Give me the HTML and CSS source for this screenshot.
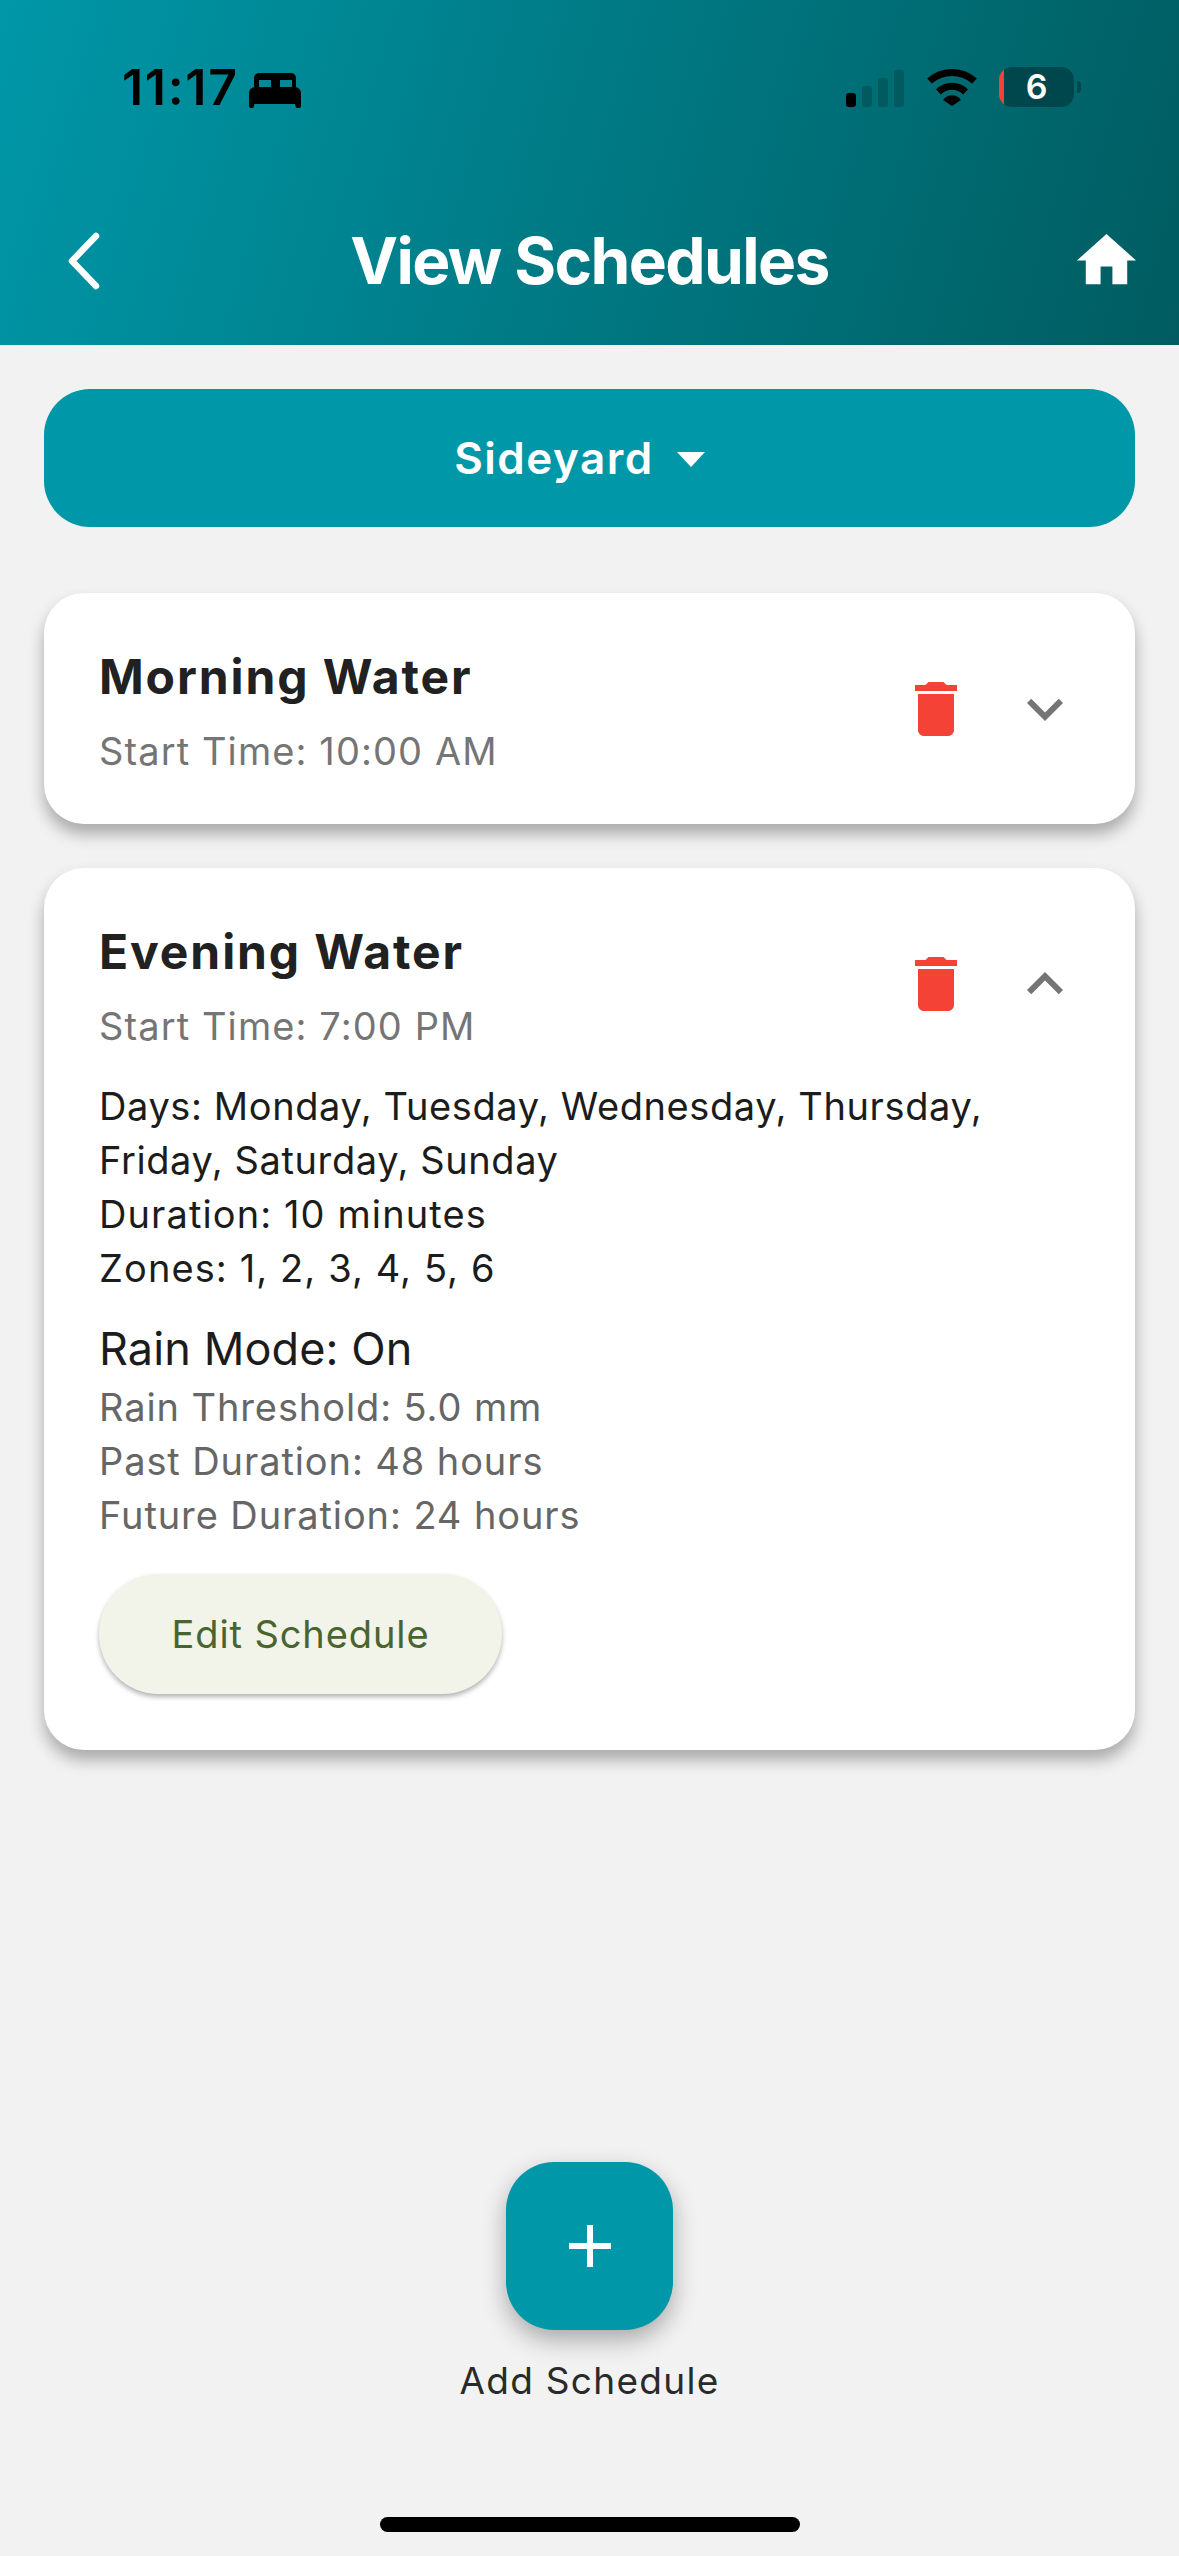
FILE: index.html
```html
<!DOCTYPE html>
<html lang="en">
<head>
<meta charset="utf-8">
<title>View Schedules</title>
<link rel="stylesheet" href="styles.css">
</head>
<body>
<div class="page">
  <header class="header">
    <div class="status">
      <div class="status-left">
        <span class="time">11:17</span>
        <svg class="bed" viewBox="0 0 52 36"><path fill-rule="evenodd" d="M10 1h32a5 5 0 0 1 5 5v9H5V6a5 5 0 0 1 5-5zM10 8v7h12V8zM31 8v7h12V8z"/><path d="M6 15h40a6 6 0 0 1 6 6v13a2 2 0 0 1-2 2h-1.500a2 2 0 0 1-2-2l-.500-2H5.500L5 34a2 2 0 0 1-2 2H2a2 2 0 0 1-2-2V21a6 6 0 0 1 6-6z"/></svg>
      </div>
      <div class="status-right">
        <div class="bars"><i class="bar bar-1"></i><i class="bar bar-2"></i><i class="bar bar-3"></i><i class="bar bar-4"></i></div>
        <svg class="wifi" viewBox="0 0 52 38"><path class="wifi-arc" d="M3.500 12A34 34 0 0 1 48.500 12"/><path class="wifi-arc" d="M12.500 23A19 19 0 0 1 39.500 23"/><path d="M17 31A11 11 0 0 1 35 31L26 37Z"/></svg>
        <div class="battery"><span>6</span></div>
        <i class="nub"></i>
      </div>
    </div>
    <div class="titlebar">
      <svg class="back" viewBox="0 0 40 60"><path d="M32 5L8 30L32 55"/></svg>
      <h1 class="title">View Schedules</h1>
      <svg class="home" viewBox="0 0 24 24"><path d="M10 20v-6h4v6h5v-8h3L12 3 2 12h3v8z"/></svg>
    </div>
  </header>

  <main class="main">
    <div class="dropdown"><span>Sideyard</span><i class="caret"></i></div>

    <section class="card">
      <div class="card-head">
        <div class="card-title">
          <h2>Morning Water</h2>
          <p class="start">Start Time: 10:00 AM</p>
        </div>
        <svg class="trash" viewBox="0 0 24 24"><path d="M6 19c0 1.100.9 2 2 2h8c1.100 0 2-.9 2-2V7H6v12zM19 4h-3.500l-1-1h-5l-1 1H5v2h14V4z"/></svg>
        <svg class="chev" viewBox="0 0 24 24"><path d="M16.590 8.590L12 13.170 7.410 8.590 6 10l6 6 6-6z"/></svg>
      </div>
    </section>

    <section class="card">
      <div class="card-head">
        <div class="card-title">
          <h2>Evening Water</h2>
          <p class="start">Start Time: 7:00 PM</p>
        </div>
        <svg class="trash" viewBox="0 0 24 24"><path d="M6 19c0 1.100.9 2 2 2h8c1.100 0 2-.9 2-2V7H6v12zM19 4h-3.500l-1-1h-5l-1 1H5v2h14V4z"/></svg>
        <svg class="chev" viewBox="0 0 24 24"><path d="M7.410 15.410L12 10.830l4.590 4.580L18 14l-6-6-6 6z"/></svg>
      </div>
      <div class="details">
        <p class="days">Days: Monday, Tuesday, Wednesday, Thursday, Friday, Saturday, Sunday</p>
        <p>Duration: 10 minutes</p>
        <p>Zones: 1, 2, 3, 4, 5, 6</p>
      </div>
      <p class="rain">Rain Mode: On</p>
      <div class="rain-details">
        <p>Rain Threshold: 5.0 mm</p>
        <p>Past Duration: 48 hours</p>
        <p>Future Duration: 24 hours</p>
      </div>
      <button class="edit">Edit Schedule</button>
    </section>
  </main>

  <footer class="footer">
    <div class="fab"><i class="plus"></i></div>
    <div class="fab-label">Add Schedule</div>
    <div class="home-bar"></div>
  </footer>
</div>
</body>
</html>
```
FILE: styles.css
```css
* { box-sizing: border-box; }
html, body { margin: 0; padding: 0; }
body { font-family: Inter, "Noto Sans", sans-serif; background: #f2f2f2; }
h1, h2, p { margin: 0; font-weight: inherit; }
i { display: block; }

.page { width: 1179px; height: 2556px; display: flex; flex-direction: column; overflow: hidden; }

.header { height: 345px; padding-top: 67px; background: linear-gradient(106deg, #0097a8 0%, #005c60 100%); }
.status { display: flex; justify-content: space-between; align-items: flex-start; height: 40px; padding: 0 98px 0 122px; }
.status-left { display: flex; align-items: center; height: 40px; gap: 10px; }
.time { font-size: 50px; line-height: 40px; font-weight: 600; color: #000; letter-spacing: 1.700px; }
.bed { width: 52px; height: 36px; margin-top: 6px; fill: #000; }
.status-right { display: flex; align-items: center; height: 40px; }
.bars { display: flex; align-items: flex-end; gap: 6px; height: 37px; margin-top: 2px; }
.bar { width: 10px; border-radius: 3px; background: #005a60; }
.bar-1 { height: 14px; background: #000; }
.bar-2 { height: 21px; }
.bar-3 { height: 29px; }
.bar-4 { height: 37px; }
.wifi { width: 52px; height: 38px; margin: 2px 0 0 22px; fill: #000; }
.wifi-arc { fill: none; stroke: #000; stroke-width: 7; }
.battery { width: 75px; height: 40px; margin-left: 21px; border-radius: 13px; background: linear-gradient(to right, #f44336 5px, #00474d 5px); display: flex; align-items: center; justify-content: center; }
.battery span { font-size: 34px; font-weight: 600; line-height: 40px; color: #fff; }
.nub { width: 4px; height: 12px; margin-left: 3px; background: #00474d; border-radius: 0 6px 6px 0; }

.titlebar { display: grid; grid-template-columns: 1fr auto 1fr; align-items: center; height: 71px; margin-top: 118px; padding: 0 37px; }
.back { width: 40px; height: 60px; margin-left: 27px; justify-self: start; fill: none; stroke: #fff; stroke-width: 6.500; stroke-linecap: round; stroke-linejoin: round; }
.title { font-size: 64px; line-height: 71px; font-weight: 700; color: #fff; letter-spacing: -1.600px; }
.home { width: 71px; height: 71px; justify-self: end; fill: #fff; }

.main { flex: 1; padding: 44px 44px 0; }
.dropdown { height: 138px; border-radius: 46px; background: #0098a9; color: #fff; display: flex; align-items: center; justify-content: center; gap: 23px; font-size: 44px; font-weight: 600; letter-spacing: 1.500px; margin-bottom: 66px; }
.caret { width: 0; height: 0; border-left: 14px solid transparent; border-right: 14px solid transparent; border-top: 15px solid #fff; margin: 2px 20px 0 0; }

.card { background: #fff; border-radius: 40px; padding: 48px 54px 48px 55px; box-shadow: 0 10px 16px rgba(0, 0, 0, 0.3); margin-bottom: 44px; }
.card-head { display: flex; align-items: center; height: 135px; }
.card-title { flex: 1; padding-top: 6px; }
.card-title h2 { font-size: 48px; line-height: 64px; font-weight: 700; color: #212121; letter-spacing: 1.900px; }
.start { font-size: 38px; line-height: 54px; color: #757575; letter-spacing: 1.100px; margin-top: 15px; }
.trash { width: 72px; height: 72px; fill: #f44336; }
.chev { width: 72px; height: 72px; margin-left: 37px; fill: #757575; }

.details { margin-top: 28px; font-size: 38px; line-height: 54px; color: #1c1c1c; letter-spacing: 1.100px; }
.days { letter-spacing: 0.600px; }
.rain { font-size: 45px; line-height: 60px; color: #1c1c1c; letter-spacing: 0.100px; margin-top: 24px; }
.rain-details { font-size: 38px; line-height: 54px; color: #666; letter-spacing: 0.900px; margin-top: 1px; }
.edit { display: block; width: 403px; height: 120px; margin: 32px 0 8px 0; border: 0; border-radius: 60px; background: #f2f4ea; color: #4a6430; font-family: inherit; font-size: 38px; font-weight: 400; letter-spacing: 0.900px; box-shadow: 0 3px 5px rgba(0, 0, 0, 0.3); }

.footer { display: flex; flex-direction: column; align-items: center; padding-bottom: 24px; }
.fab { width: 167px; height: 168px; border-radius: 48px; background: #0098a9; display: flex; align-items: center; justify-content: center; box-shadow: 0 10px 24px rgba(0, 0, 0, 0.3); }
.plus { width: 42px; height: 42px; background: linear-gradient(#fff, #fff) center / 6px 42px no-repeat, linear-gradient(#fff, #fff) center / 42px 6px no-repeat; }
.fab-label { margin-top: 26px; font-size: 37px; line-height: 50px; color: #2a2a2a; letter-spacing: 1.300px; }
.home-bar { width: 420px; height: 15px; margin-top: 111px; background: #000; border-radius: 8px; }
```
